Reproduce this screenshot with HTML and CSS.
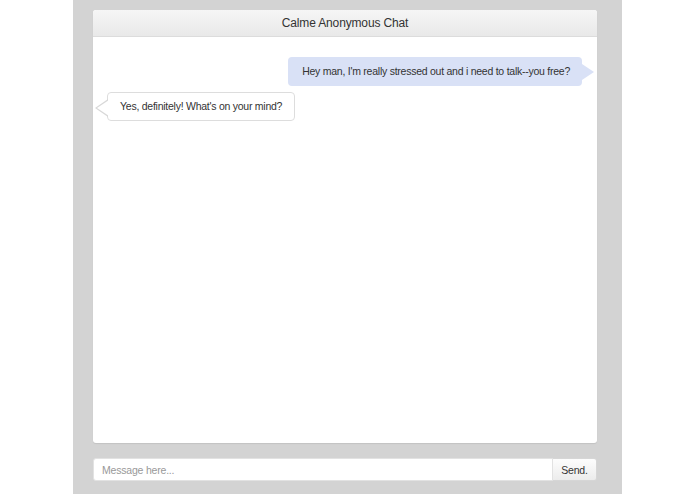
FILE: index.html
```html
<!DOCTYPE html>
<html>
<head>
<meta charset="utf-8">
<link rel="stylesheet" href="styles.css">
</head>
<body>
<div class="page">
  <div class="panel">
    <div class="panel-header">Calme Anonymous Chat</div>
    <div class="messages">
      <div class="msg msg-me">Hey man, I'm really stressed out and i need to talk--you free?</div>
      <div class="msg msg-them">Yes, definitely! What's on your mind?</div>
    </div>
  </div>
  <div class="composer">
    <input class="composer-input" type="text" placeholder="Message here...">
    <button class="composer-send">Send.</button>
  </div>
</div>
</body>
</html>
```
FILE: styles.css
```css
html, body {
  margin: 0;
  padding: 0;
  background: #ffffff;
  font-family: "Liberation Sans", Arial, Helvetica, sans-serif;
  color: #333333;
}
.page {
  width: 549px;
  height: 494px;
  margin-left: 73px;
  background: #d3d3d3;
  box-sizing: border-box;
  padding: 10px 25px 0 20px;
  display: flex;
  flex-direction: column;
}
.panel {
  height: 433px;
  background: #ffffff;
  border-radius: 3px;
  box-shadow: 0 1px 1px rgba(0,0,0,0.08);
  display: flex;
  flex-direction: column;
  overflow: hidden;
}
.panel-header {
  height: 27px;
  box-sizing: border-box;
  background: linear-gradient(#f6f6f6, #e9e9e9);
  border-bottom: 1px solid #dcdcdc;
  text-align: center;
  font-size: 12px;
  letter-spacing: -0.15px;
  line-height: 27px;
  color: #333;
}
.messages {
  padding: 20px 15px 0 14px;
  display: flex;
  flex-direction: column;
  gap: 6px;
}
.msg {
  position: relative;
  font-size: 10.5px;
  letter-spacing: -0.25px;
  line-height: 13px;
  padding: 8px 12px 8px 14px;
  border-radius: 4px;
  color: #333;
}
.msg-me {
  align-self: flex-end;
  background: #d9e1f6;
}
.msg-me::after {
  content: "";
  position: absolute;
  right: -12px;
  top: 7px;
  border-left: 12px solid #d9e1f6;
  border-top: 8px solid transparent;
  border-bottom: 8px solid transparent;
}
.msg-them {
  align-self: flex-start;
  background: #ffffff;
  border: 1px solid #dddddd;
  padding: 7px 12px 7px 12px;
}
.msg-them::before {
  content: "";
  position: absolute;
  left: -13px;
  top: 6px;
  border-right: 13px solid #d8d8d8;
  border-top: 9px solid transparent;
  border-bottom: 9px solid transparent;
}
.msg-them::after {
  content: "";
  position: absolute;
  left: -11px;
  top: 7px;
  border-right: 12px solid #ffffff;
  border-top: 8px solid transparent;
  border-bottom: 8px solid transparent;
}
.composer {
  margin-top: 15px;
  display: flex;
  height: 23px;
}
.composer-input {
  flex: 1;
  height: 23px;
  box-sizing: border-box;
  border: 1px solid #e2e2e2;
  border-radius: 3px 0 0 3px;
  padding: 0 8px;
  font-family: "Liberation Sans", Arial, sans-serif;
  font-size: 10.5px;
  letter-spacing: -0.2px;
  color: #333;
  background: #fff;
  outline: none;
}
.composer-input::placeholder {
  color: #999;
}
.composer-send {
  width: 44px;
  height: 23px;
  box-sizing: border-box;
  border: 1px solid #d6d6d6;
  border-left: none;
  border-radius: 0 3px 3px 0;
  background: linear-gradient(#fdfdfd, #ececec);
  font-family: "Liberation Sans", Arial, sans-serif;
  font-size: 10.5px;
  letter-spacing: -0.2px;
  color: #333;
  padding: 0;
}
```
